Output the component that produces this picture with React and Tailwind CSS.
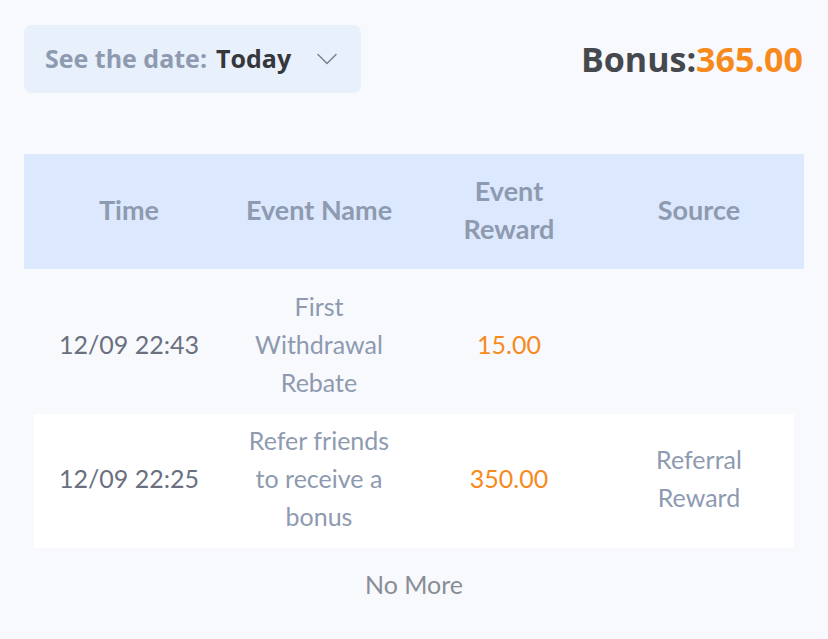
import { ChevronDown } from 'lucide-react';

const rows = [
  { time: '12/09 22:43', name: ['First', 'Withdrawal', 'Rebate'], reward: '15.00', source: [], card: false },
  { time: '12/09 22:25', name: ['Refer friends', 'to receive a', 'bonus'], reward: '350.00', source: ['Referral', 'Reward'], card: true },
];

export default function App() {
  return (
    <div className="min-h-[639px] w-[828px] bg-[#f7f9fc] px-6 pt-[25px] font-['Lato',sans-serif]">
      <div className="flex items-center justify-between font-['Open_Sans',sans-serif]">
        <div className="flex h-[68px] w-[337px] items-center rounded-lg bg-[#e8f0fc] pl-[21px]">
          <span className="text-[25px] font-bold text-[#8e9ab0]">See the date:</span>
          <span className="ml-[9px] text-[25px] font-bold text-[#35373b]">Today</span>
          <ChevronDown className="ml-[18px] h-9 w-9 text-[#7b8290]" strokeWidth={1} />
        </div>
        <div className="pr-[1px] text-[34px] font-bold">
          <span className="text-[#45484d]">Bonus:</span>
          <span className="text-[#f78a1d]">365.00</span>
        </div>
      </div>

      <div className="mt-[61px]">
        <div className="grid h-[115px] grid-cols-4 items-center bg-[#dce8fd] px-[10px] pb-[4px] text-center text-[27px] font-bold leading-[38px] text-[#8e9ab0]">
          <div>Time</div>
          <div>Event Name</div>
          <div>Event<br />Reward</div>
          <div>Source</div>
        </div>

        {rows.map((r) => (
          <div
            key={r.time}
            className={
              r.card
                ? 'mx-[10px] grid h-[134px] grid-cols-4 items-center bg-white pb-[6px] text-center text-[25px] leading-[38px]'
                : 'mx-[10px] grid h-[145px] grid-cols-4 items-center pt-[4px] text-center text-[25px] leading-[38px]'
            }
          >
            <div className="text-[#6b7080]">{r.time}</div>
            <div className="text-[#8e9ab0]">
              {r.name.map((l) => (
                <div key={l}>{l}</div>
              ))}
            </div>
            <div className="text-[#f78a1d]">{r.reward}</div>
            <div className="text-[#8e9ab0]">
              {r.source.map((l) => (
                <div key={l}>{l}</div>
              ))}
            </div>
          </div>
        ))}

        <div className="mt-[17px] text-center text-[25px] leading-[38px] text-[#888d96]">No More</div>
      </div>
    </div>
  );
}
